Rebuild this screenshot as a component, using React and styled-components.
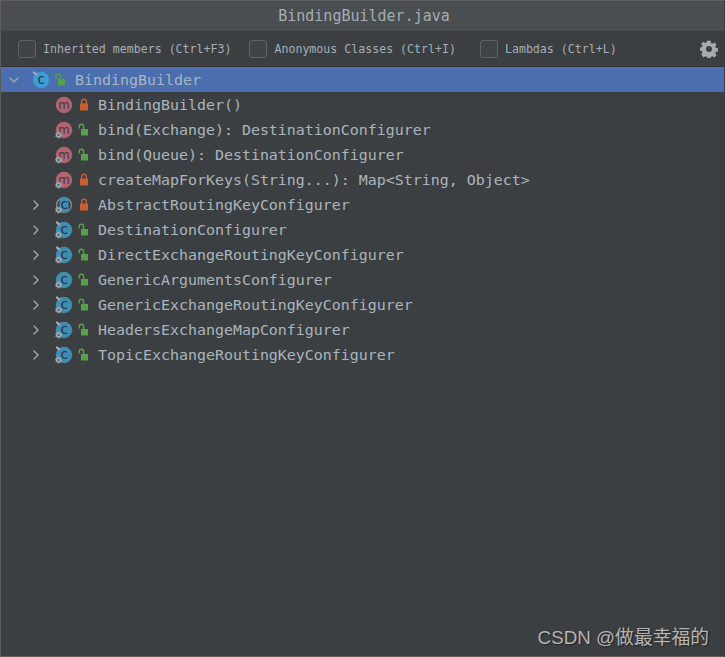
import React from "react";
import styled, { createGlobalStyle } from "styled-components";
import { ChevronDown, ChevronRight } from "lucide-react";

const Global = createGlobalStyle`
  html, body { margin: 0; padding: 0; background: #3c3f41; }
`;

const Window = styled.div`
  position: relative;
  box-sizing: border-box;
  width: 725px;
  height: 657px;
  background: #3c3f41;
  border: 1px solid #5c5e60;
  border-right-color: #3c3f41;
  font-family: "DejaVu Sans Mono", monospace;
  overflow: hidden;
`;

const TitleBar = styled.div`
  height: 30px;
  display: flex;
  align-items: center;
  justify-content: center;
  background: #4b4e50;
  color: #a3adb4;
  font-size: 15px;
  padding-left: 3px;
`;

const Toolbar = styled.div`
  height: 35px;
  display: flex;
  align-items: center;
  padding: 0 6px 0 17px;
  background: #3c3f41;
  border-bottom: 1px solid #323232;
`;

const Option = styled.label`
  display: flex;
  align-items: center;
  gap: 7px;
  margin-right: ${(p) => p.$gap}px;
  color: #a3aeb5;
  font-size: 11.6px;
`;

const Box = styled.span`
  box-sizing: border-box;
  width: 18px;
  height: 18px;
  border: 1px solid #5f6265;
  border-radius: 3px;
  background: #3f4446;
`;

const Gear = styled.svg`
  margin-left: auto;
  width: 18px;
  height: 18px;
`;

const Tree = styled.div`
  display: flex;
  flex-direction: column;
`;

const Row = styled.div`
  height: 25px;
  display: flex;
  align-items: center;
  padding-left: ${(p) => p.$indent}px;
  background: ${(p) => (p.$selected ? "#4b6eaf" : "transparent")};
  color: #a9b5be;
  font-size: 14.95px;
  white-space: pre;
`;

const Arrow = styled.span`
  display: flex;
  justify-content: center;
  width: 16px;
  margin-right: ${(p) => p.$gap}px;
  color: #a4a8aa;
`;

const IconSlot = styled.span`
  display: flex;
  justify-content: center;
  width: 20px;
`;

const LockSlot = styled(IconSlot)`
  margin-right: 4px;
`;

const Watermark = styled.div`
  position: absolute;
  right: 15px;
  bottom: 7px;
  color: #b4b4b4;
  font-family: "Liberation Sans", "Noto Sans CJK SC", sans-serif;
  font-size: 18.8px;
  text-shadow: 1px 1px 1px #222;
`;

const SmallGear = ({ x, y }) => (
  <g transform={`translate(${x} ${y})`}>
    <circle r="2.2" fill="#5d6a73" stroke="#a3aeb6" strokeWidth="1.4" />
    <circle r="3.4" fill="none" stroke="#a3aeb6" strokeWidth="1" strokeDasharray="1.3 1.37" />
  </g>
);

const Pin = () => (
  <line x1="2.5" y1="2" x2="6.5" y2="5.5" stroke="#a6acb0" strokeWidth="2.4" />
);

const Letter = styled.text`
  font-family: ${(p) => p.$font}, sans-serif;
  font-size: ${(p) => p.$size}px;
  fill: ${(p) => p.$fill};
  text-anchor: middle;
`;

const MemberIcon = ({ kind, gear, pin, abstract }) => {
  const fills = { m: "#b3646f", c: "#3f8db3", root: "#3b9ed8" };
  return (
    <svg width="22" height="22" viewBox="0 0 22 22">
      {abstract ? (
        <>
          <circle cx="11" cy="11" r="8.2" fill="#3c3f41" stroke="#8b8f92" strokeWidth="1.4" />
          <rect x="6" y="3" width="10" height="16" rx="2" fill={fills.c} />
        </>
      ) : (
        <circle cx="11" cy="11" r="9" fill={fills[kind]} />
      )}
      {kind === "m" ? (
        <Letter x="11" y="15" $size={13} $font="DejaVu Sans" $fill="#4a363d">m</Letter>
      ) : (
        <Letter x="11" y="15.5" $size={15} $font="DejaVu Sans Mono" $fill="#26343e">c</Letter>
      )}
      {pin && <Pin />}
      {gear && <SmallGear x={5} y={16.5} />}
    </svg>
  );
};

const Lock = ({ open }) => (
  <svg width="12" height="14" viewBox="0 0 12 14">
    {open ? (
      <>
        <path d="M1.2 5.5 V3.4 A2.2 2.2 0 0 1 5.6 3.4 V7" fill="none" stroke="#55a048" strokeWidth="1.4" />
        <rect x="3" y="6" width="7" height="6.5" fill="#55a048" />
      </>
    ) : (
      <>
        <path d="M3.7 6 V3.6 A2.3 2.3 0 0 1 8.3 3.6 V6" fill="none" stroke="#c75f30" strokeWidth="1.4" />
        <rect x="2" y="5.5" width="8" height="7" fill="#c75f30" />
      </>
    )}
  </svg>
);

const members = [
  { text: "BindingBuilder()" },
  { text: "bind(Exchange): DestinationConfigurer", gear: true, open: true },
  { text: "bind(Queue): DestinationConfigurer", gear: true, open: true },
  { text: "createMapForKeys(String...): Map<String, Object>", gear: true },
];

const classes = [
  { text: "AbstractRoutingKeyConfigurer", abstract: true, gear: true },
  { text: "DestinationConfigurer", pin: true, gear: true, open: true },
  { text: "DirectExchangeRoutingKeyConfigurer", pin: true, gear: true, open: true },
  { text: "GenericArgumentsConfigurer", gear: true, open: true },
  { text: "GenericExchangeRoutingKeyConfigurer", pin: true, gear: true, open: true },
  { text: "HeadersExchangeMapConfigurer", pin: true, gear: true, open: true },
  { text: "TopicExchangeRoutingKeyConfigurer", pin: true, gear: true, open: true },
];

export default function App() {
  return (
    <>
      <Global />
      <Window>
        <TitleBar>BindingBuilder.java</TitleBar>
        <Toolbar>
          <Option $gap={18}><Box />Inherited members (Ctrl+F3)</Option>
          <Option $gap={24}><Box />Anonymous Classes (Ctrl+I)</Option>
          <Option $gap={0}><Box />Lambdas (Ctrl+L)</Option>
          <Gear viewBox="0 0 24 24">
            <path
              fill="#a7abad"
              fillRule="evenodd"
              d="M10 1h4l.6 3 2 .9 2.6-1.7 2.8 2.8-1.7 2.6.9 2 3 .6v4l-3 .6-.9 2 1.7 2.6-2.8 2.8-2.6-1.7-2 .9-.6 3h-4l-.6-3-2-.9-2.6 1.7L1.6 19.4l1.7-2.6-.9-2-3-.6v-4l3-.6.9-2L1.6 5l2.8-2.8L7 3.9l2-.9.6-3zM12 8a4 4 0 1 0 0 8 4 4 0 0 0 0-8z"
            />
          </Gear>
        </Toolbar>
        <Tree>
          <Row $selected $indent={5}>
            <Arrow $gap={9}><ChevronDown size={18} /></Arrow>
            <IconSlot><MemberIcon kind="root" pin /></IconSlot>
            <LockSlot><Lock open /></LockSlot>
            BindingBuilder
          </Row>
          {members.map((m) => (
            <Row key={m.text} $indent={53}>
              <IconSlot><MemberIcon kind="m" gear={m.gear} /></IconSlot>
              <LockSlot><Lock open={m.open} /></LockSlot>
              {m.text}
            </Row>
          ))}
          {classes.map((c) => (
            <Row key={c.text} $indent={27}>
              <Arrow $gap={10}><ChevronRight size={18} /></Arrow>
              <IconSlot><MemberIcon kind="c" gear={c.gear} pin={c.pin} abstract={c.abstract} /></IconSlot>
              <LockSlot><Lock open={c.open} /></LockSlot>
              {c.text}
            </Row>
          ))}
        </Tree>
        <Watermark>CSDN @做最幸福的</Watermark>
      </Window>
    </>
  );
}
